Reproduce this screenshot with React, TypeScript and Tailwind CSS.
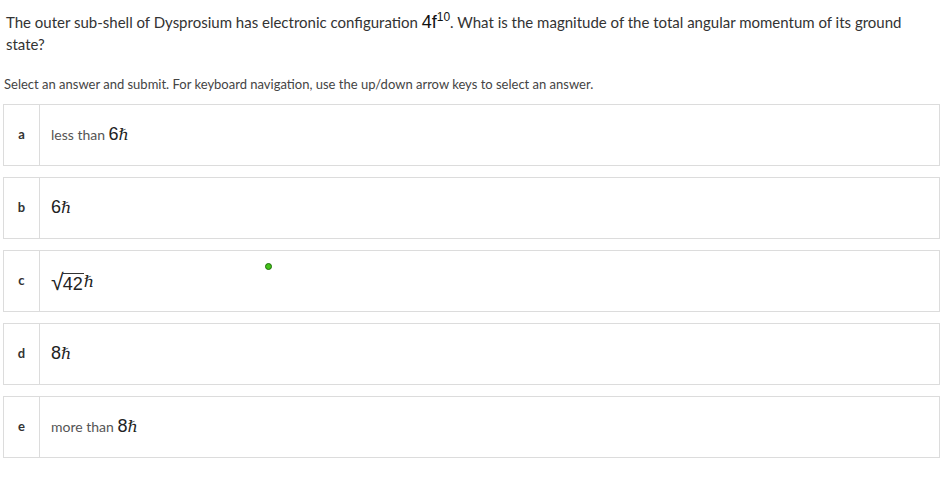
import React from 'react';

const Hbar = () => <span className="italic text-[16px]" style={{ fontFamily: '"DejaVu Serif", serif' }}>ℏ</span>;

function MathNum({ children }: { children: React.ReactNode }) {
  return (
    <span className="text-[18px] text-[#222] font-['Liberation_Sans',sans-serif]">
      {children}
      <Hbar />
    </span>
  );
}

const options = [
  { id: 'a', content: <span>less than <MathNum>6</MathNum></span> },
  { id: 'b', content: <MathNum>6</MathNum> },
  {
    id: 'c',
    content: (
      <span className="inline-flex items-end pt-[3px] text-[18px] text-[#222] font-['Liberation_Sans',sans-serif]">
        <span className="text-[23px] leading-[24px] font-['DejaVu_Sans',sans-serif] font-extralight">√</span>
        <span className="border-t border-[#333] leading-[20px] -ml-[1px] pr-[1px]">42</span>
        <Hbar />
      </span>
    ),
  },
  { id: 'd', content: <MathNum>8</MathNum> },
  { id: 'e', content: <span>more than <MathNum>8</MathNum></span> },
];

export default function App() {
  return (
    <div className="relative w-[946px] h-[500px] bg-white font-['Lato',sans-serif] text-[#3a3a3a]">
      <div className="pl-[6px] pr-6 pt-[11px] text-[15px] leading-[22px] text-[#333]">
        The outer sub-shell of Dysprosium has electronic configuration{' '}
        <span className="text-[18px] text-[#111] font-['Liberation_Sans',sans-serif]">
          4f<sup className="text-[12px] leading-none -top-[0.55em]">10</sup>
        </span>
        . What is the magnitude of the total angular momentum of its ground state?
      </div>
      <div className="pl-[4px] mt-[20px] text-[13px] text-[#444]">
        Select an answer and submit. For keyboard navigation, use the up/down arrow keys to select an answer.
      </div>
      <div className="mt-[9px] ml-[3px] w-[937px] flex flex-col gap-[11px]">
        {options.map((o) => (
          <div key={o.id} className="flex h-[62px] border border-[#dcdcdc]">
            <div className="w-[36px] flex items-center justify-center border-r border-[#dcdcdc] text-[13px] font-bold text-[#333]">
              {o.id}
            </div>
            <div className="flex items-center pl-[11px] text-[14px] text-[#555]">{o.content}</div>
          </div>
        ))}
      </div>
      <div className="absolute left-[265px] top-[263px] w-[7px] h-[7px] rounded-full bg-[#44c21a] border border-[#1e6e0a]" />
    </div>
  );
}
